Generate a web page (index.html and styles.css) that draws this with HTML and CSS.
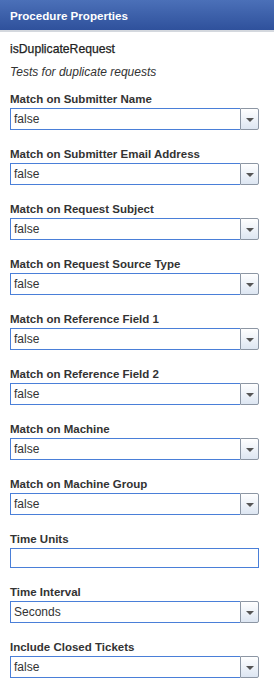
FILE: index.html
```html
<!DOCTYPE html>
<html lang="en">
<head>
  <meta charset="UTF-8">
  <title>Procedure Properties</title>
  <link rel="stylesheet" href="styles.css">
</head>
<body>

  <!-- Panel header -->
  <div class="panel-header">Procedure Properties</div>

  <div class="panel-body">
    <div class="proc-name">isDuplicateRequest</div>
    <div class="proc-desc">Tests for duplicate requests</div>

    <div class="field">
      <label>Match on Submitter Name</label>
      <div class="combo"><span class="combo-value">false</span><span class="combo-btn"></span></div>
    </div>

    <div class="field">
      <label>Match on Submitter Email Address</label>
      <div class="combo"><span class="combo-value">false</span><span class="combo-btn"></span></div>
    </div>

    <div class="field">
      <label>Match on Request Subject</label>
      <div class="combo"><span class="combo-value">false</span><span class="combo-btn"></span></div>
    </div>

    <div class="field">
      <label>Match on Request Source Type</label>
      <div class="combo"><span class="combo-value">false</span><span class="combo-btn"></span></div>
    </div>

    <div class="field">
      <label>Match on Reference Field 1</label>
      <div class="combo"><span class="combo-value">false</span><span class="combo-btn"></span></div>
    </div>

    <div class="field">
      <label>Match on Reference Field 2</label>
      <div class="combo"><span class="combo-value">false</span><span class="combo-btn"></span></div>
    </div>

    <div class="field">
      <label>Match on Machine</label>
      <div class="combo"><span class="combo-value">false</span><span class="combo-btn"></span></div>
    </div>

    <div class="field">
      <label>Match on Machine Group</label>
      <div class="combo"><span class="combo-value">false</span><span class="combo-btn"></span></div>
    </div>

    <div class="field field-text">
      <label>Time Units</label>
      <div class="text-box"></div>
    </div>

    <div class="field">
      <label>Time Interval</label>
      <div class="combo"><span class="combo-value">Seconds</span><span class="combo-btn"></span></div>
    </div>

    <div class="field">
      <label>Include Closed Tickets</label>
      <div class="combo"><span class="combo-value">false</span><span class="combo-btn"></span></div>
    </div>
  </div>

</body>
</html>
```

FILE: styles.css
```css
:root {
  --text-color: #333;
  --field-border: #4a7fd8;
  --btn-border: #8c96a4;
}

body {
  margin: 0;
  font-family: "Liberation Sans", Arial, sans-serif;
  font-size: 12px;
  color: var(--text-color);
  background: #fff;
}

.panel-header {
  height: 30px;
  line-height: 31px;
  padding-left: 10px;
  color: #fff;
  font-weight: bold;
  font-size: 11.6px;
  background: linear-gradient(to bottom, #4b70b8 0%, #2f519c 100%);
  border-bottom: 2px solid #d4d8de;
}

.panel-body {
  padding: 8px 15px 10px 10px;
}

.proc-name {
  line-height: 16px;
  margin-top: 1px;
  font-size: 12.2px;
  color: #222;
  -webkit-text-stroke: 0.25px #222;
}

.proc-desc {
  font-style: italic;
  line-height: 16px;
  margin-top: 7px;
}

.field {
  margin-top: 12px;
  height: 55px;
}

.field + .field {
  margin-top: 0;
}

.field-text {
  height: 53px;
}

.field label {
  display: block;
  font-weight: bold;
  font-size: 11.5px;
  line-height: 15px;
  margin-bottom: 1px;
}

.combo {
  display: flex;
  height: 22px;
  box-sizing: border-box;
}

.combo-value {
  flex: 1;
  border: 1px solid var(--field-border);
  border-right: none;
  padding-left: 3px;
  line-height: 20px;
}

.combo-btn {
  width: 17px;
  border: 1px solid var(--btn-border);
  border-radius: 0 2px 2px 0;
  background: linear-gradient(to bottom, #ffffff 0%, #dde6f2 100%);
  position: relative;
}

.combo-btn::after {
  content: "";
  position: absolute;
  left: 5px;
  top: 9px;
  border-left: 4px solid transparent;
  border-right: 4px solid transparent;
  border-top: 4px solid #555;
}

.text-box {
  height: 20px;
  box-sizing: border-box;
  border: 1px solid var(--field-border);
  margin-top: 1px;
}
```
